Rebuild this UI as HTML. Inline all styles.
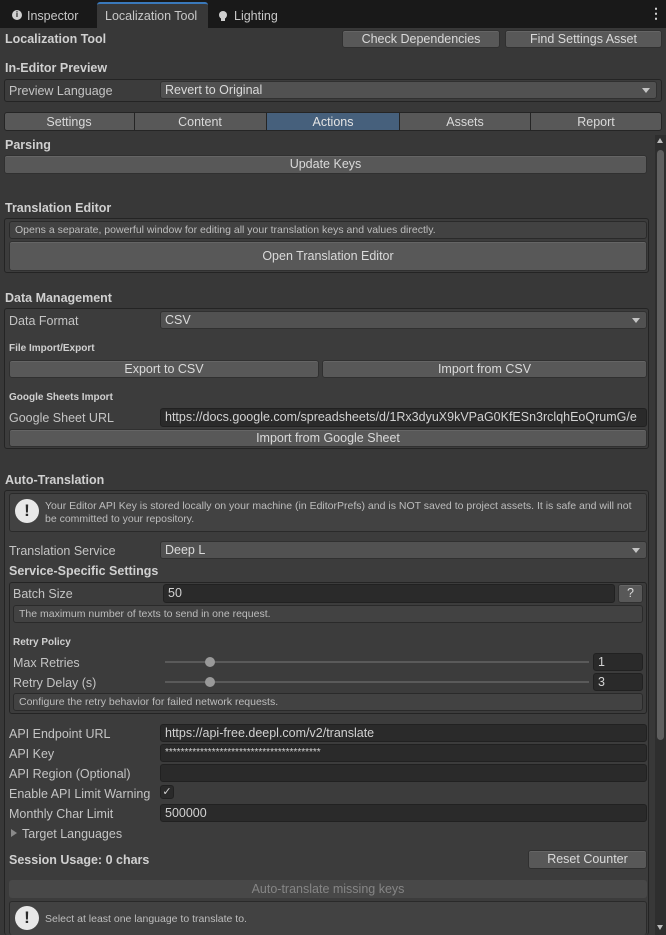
<!DOCTYPE html>
<html style="width:666px;height:935px;overflow:hidden"><head><style>
*{box-sizing:border-box;margin:0;padding:0}
body{width:666px;height:935px;background:#383838;font-family:"Liberation Sans",sans-serif;font-size:12.5px;color:#c4c4c4;position:relative;overflow:hidden}
.a{position:absolute;white-space:nowrap}
.b{font-weight:bold;color:#d0d0d0}
.btn{position:absolute;background:#585858;border:1px solid #303030;border-radius:3px;color:#dadada;text-align:center;box-shadow:inset 0 1px 0 #656565}
.fld{position:absolute;background:#2a2a2a;border:1px solid #212121;border-radius:3px;color:#d2d2d2;padding-left:4px;white-space:nowrap;overflow:hidden}
.dd{position:absolute;background:#515151;border:1px solid #303030;border-radius:3px;color:#dadada;padding-left:4px}
.dd:after{content:"";position:absolute;right:6px;top:6px;border:4px solid transparent;border-top:5px solid #c4c4c4;border-bottom:0}
.box{position:absolute;border:1px solid #242424;border-radius:3px;background:#3c3c3c}
.hb{position:absolute;background:#424242;border:1px solid #2a2a2a;border-radius:3px;font-size:10.5px;color:#bdbdbd;padding-left:5px}
.sm{font-size:10px;font-weight:bold;color:#d0d0d0}
</style></head><body>
<div class="a" style="left:0;top:0;width:666px;height:28px;background:#191919"></div>
<div class="a" style="left:97px;top:2px;width:111px;height:26px;background:#383838;border-top:2px solid #3a79bb;border-radius:3px 3px 0 0"></div>
<div class="a" style="left:12px;top:10px;width:10px;height:10px;border-radius:50%;background:#d0d0d0;color:#191919;font-size:8px;font-weight:bold;text-align:center;line-height:10px">i</div>
<div class="a" style="left:27px;top:9px;color:#c8c8c8">Inspector</div>
<div class="a" style="left:105px;top:9px;color:#c8c8c8">Localization Tool</div>
<div class="a" style="left:219px;top:11px;width:8px;height:8px;border-radius:50%;background:#d0d0d0"></div>
<div class="a" style="left:221px;top:18px;width:4px;height:3px;background:#d0d0d0"></div>
<div class="a" style="left:234px;top:9px;color:#c8c8c8">Lighting</div>
<div class="a b" style="left:649px;top:5px;font-size:14px">⋮</div>

<div class="a b" style="left:5px;top:32px">Localization Tool</div>
<div class="btn" style="left:342px;top:30px;width:158px;height:18px;line-height:16px">Check Dependencies</div>
<div class="btn" style="left:505px;top:30px;width:157px;height:18px;line-height:16px">Find Settings Asset</div>
<div class="a b" style="left:5px;top:61px">In-Editor Preview</div>
<div class="box" style="left:4px;top:79px;width:658px;height:23px"></div>
<div class="a" style="left:9px;top:84px">Preview Language</div>
<div class="dd" style="left:160px;top:81px;width:497px;height:18px;line-height:16px">Revert to Original</div>

<div class="a" style="left:4px;top:112px;width:658px;height:19px;background:#585858;border:1px solid #252525;border-radius:3px"></div>
<div class="a" style="left:266px;top:112px;width:134px;height:19px;background:#46607c;border:1px solid #252525"></div>
<div class="a" style="left:134px;top:112px;width:1px;height:19px;background:#252525"></div>
<div class="a" style="left:530px;top:112px;width:1px;height:19px;background:#252525"></div>
<div class="a" style="left:4px;top:115px;width:130px;text-align:center;color:#dadada">Settings</div>
<div class="a" style="left:134px;top:115px;width:132px;text-align:center;color:#dadada">Content</div>
<div class="a" style="left:266px;top:115px;width:134px;text-align:center;color:#e4e4e4">Actions</div>
<div class="a" style="left:400px;top:115px;width:130px;text-align:center;color:#dadada">Assets</div>
<div class="a" style="left:530px;top:115px;width:132px;text-align:center;color:#dadada">Report</div>

<div class="a" style="left:655px;top:135px;width:11px;height:800px;background:#2e2e2e"></div>
<div class="a" style="left:657px;top:150px;width:7px;height:590px;background:#5f5f5f;border-radius:4px"></div>
<div class="a" style="left:657px;top:138px;border:3.5px solid transparent;border-bottom:5px solid #bbb;border-top:0"></div>
<div class="a" style="left:657px;top:925px;border:3.5px solid transparent;border-top:5px solid #bbb;border-bottom:0"></div>

<div class="a b" style="left:5px;top:138px">Parsing</div>
<div class="btn" style="left:4px;top:155px;width:643px;height:19px;line-height:17px">Update Keys</div>

<div class="a b" style="left:5px;top:201px">Translation Editor</div>
<div class="box" style="left:4px;top:218px;width:645px;height:55px"></div>
<div class="hb" style="left:9px;top:221px;width:638px;height:18px;line-height:16px">Opens a separate, powerful window for editing all your translation keys and values directly.</div>
<div class="btn" style="left:9px;top:241px;width:638px;height:30px;line-height:28px">Open Translation Editor</div>

<div class="a b" style="left:5px;top:291px">Data Management</div>
<div class="box" style="left:4px;top:308px;width:645px;height:141px"></div>
<div class="a" style="left:9px;top:314px">Data Format</div>
<div class="dd" style="left:160px;top:311px;width:487px;height:18px;line-height:16px">CSV</div>
<div class="a sm" style="left:9px;top:343px">File Import/Export</div>
<div class="btn" style="left:9px;top:360px;width:310px;height:18px;line-height:16px">Export to CSV</div>
<div class="btn" style="left:322px;top:360px;width:325px;height:18px;line-height:16px">Import from CSV</div>
<div class="a sm" style="left:9px;top:392px">Google Sheets Import</div>
<div class="a" style="left:9px;top:411px">Google Sheet URL</div>
<div class="fld" style="left:160px;top:408px;width:487px;height:19px;line-height:17px">https://docs.google.com/spreadsheets/d/1Rx3dyuX9kVPaG0KfESn3rclqhEoQrumG/e</div>
<div class="btn" style="left:9px;top:429px;width:638px;height:18px;line-height:16px">Import from Google Sheet</div>

<div class="a b" style="left:5px;top:473px">Auto-Translation</div>
<div class="box" style="left:4px;top:490px;width:645px;height:445px;border-bottom:none"></div>
<div class="hb" style="left:9px;top:493px;width:638px;height:39px;padding-left:35px;padding-top:6px;line-height:13px;white-space:normal">Your Editor API Key is stored locally on your machine (in EditorPrefs) and is NOT saved to project assets. It is safe and will not be committed to your repository.</div>
<div class="a" style="left:15px;top:499px;width:24px;height:24px;border-radius:50%;background:#e8e8e8;color:#2a2a2a;font-weight:bold;font-size:17px;text-align:center;line-height:24px">!</div>
<div class="a" style="left:9px;top:544px">Translation Service</div>
<div class="dd" style="left:160px;top:541px;width:487px;height:18px;line-height:16px">Deep L</div>
<div class="a b" style="left:9px;top:564px">Service-Specific Settings</div>
<div class="box" style="left:9px;top:582px;width:638px;height:132px"></div>
<div class="a" style="left:13px;top:587px">Batch Size</div>
<div class="fld" style="left:163px;top:584px;width:452px;height:19px;line-height:17px">50</div>
<div class="btn" style="left:618px;top:584px;width:25px;height:19px;line-height:17px">?</div>
<div class="hb" style="left:13px;top:605px;width:630px;height:18px;line-height:16px">The maximum number of texts to send in one request.</div>
<div class="a sm" style="left:13px;top:637px">Retry Policy</div>
<div class="a" style="left:13px;top:656px">Max Retries</div>
<div class="a" style="left:165px;top:661px;width:424px;height:2px;background:#5a5a5a"></div>
<div class="a" style="left:205px;top:657px;width:10px;height:10px;border-radius:50%;background:#999"></div>
<div class="fld" style="left:593px;top:653px;width:50px;height:18px;line-height:16px">1</div>
<div class="a" style="left:13px;top:676px">Retry Delay (s)</div>
<div class="a" style="left:165px;top:681px;width:424px;height:2px;background:#5a5a5a"></div>
<div class="a" style="left:205px;top:677px;width:10px;height:10px;border-radius:50%;background:#999"></div>
<div class="fld" style="left:593px;top:673px;width:50px;height:18px;line-height:16px">3</div>
<div class="hb" style="left:13px;top:693px;width:630px;height:18px;line-height:16px">Configure the retry behavior for failed network requests.</div>

<div class="a" style="left:9px;top:727px">API Endpoint URL</div>
<div class="fld" style="left:160px;top:724px;width:487px;height:18px;line-height:16px">https://api-free.deepl.com/v2/translate</div>
<div class="a" style="left:9px;top:747px">API Key</div>
<div class="fld" style="left:160px;top:744px;width:487px;height:18px;line-height:16px;font-size:10px">****************************************</div>
<div class="a" style="left:9px;top:767px">API Region (Optional)</div>
<div class="fld" style="left:160px;top:764px;width:487px;height:18px"></div>
<div class="a" style="left:9px;top:787px">Enable API Limit Warning</div>
<div class="fld" style="left:160px;top:785px;width:14px;height:14px;padding:0;text-align:center;line-height:13px;font-size:11px">✓</div>
<div class="a" style="left:9px;top:807px">Monthly Char Limit</div>
<div class="fld" style="left:160px;top:804px;width:487px;height:18px;line-height:16px">500000</div>
<div class="a" style="left:11px;top:829px;border:4px solid transparent;border-left:6px solid #8a8a8a;border-right:0"></div>
<div class="a" style="left:22px;top:827px">Target Languages</div>
<div class="a b" style="left:9px;top:853px">Session Usage: 0 chars</div>
<div class="btn" style="left:528px;top:850px;width:119px;height:19px;line-height:17px">Reset Counter</div>
<div class="a" style="left:9px;top:880px;width:638px;height:18px;background:#484848;border-radius:3px;color:#858585;text-align:center;line-height:18px">Auto-translate missing keys</div>
<div class="hb" style="left:9px;top:901px;width:638px;height:34px;padding-left:35px;padding-top:11px;border-bottom:none">Select at least one language to translate to.</div>
<div class="a" style="left:15px;top:906px;width:24px;height:24px;border-radius:50%;background:#e8e8e8;color:#2a2a2a;font-weight:bold;font-size:17px;text-align:center;line-height:24px">!</div>
</body></html>
